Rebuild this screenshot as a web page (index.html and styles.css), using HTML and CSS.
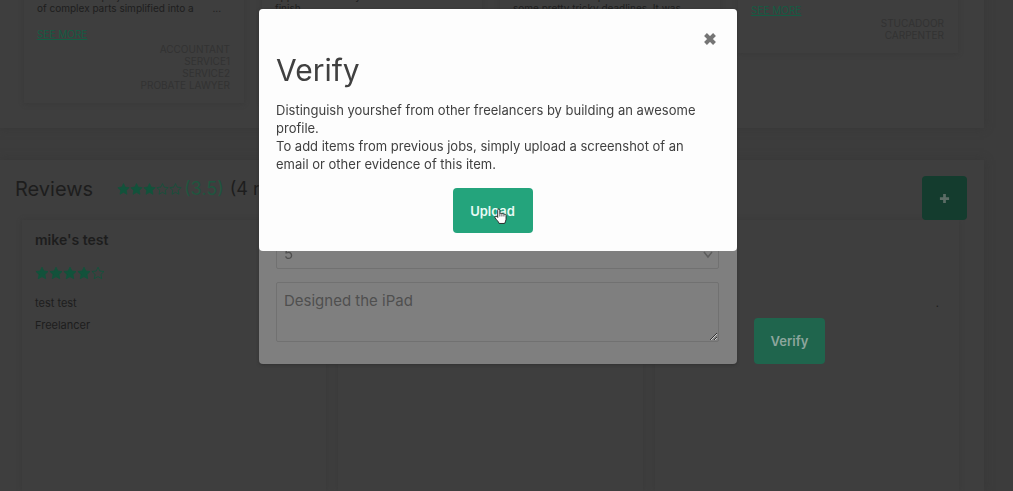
FILE: index.html
```html
<!DOCTYPE html>
<html lang="en">
<head>
<meta charset="utf-8">
<title>Verify</title>
<link rel="stylesheet" href="styles.css">
</head>
<body>
<svg class="defs" aria-hidden="true">
  <symbol id="star" viewBox="0 0 24 24"><path d="M12 2l3.100 6.600 7.200.9-5.300 5 1.400 7.200L12 18.200l-6.400 3.500L7 14.500l-5.300-5 7.200-.9z" stroke="currentColor" stroke-width="1.500" stroke-linejoin="round"/></symbol>
</svg>

<main class="page">
  <section class="panel jobs">
    <article class="job">
      <p>to deliver the project with a lot<br>of complex parts simplified into a <span class="more">...</span></p>
      <a href="#">SEE MORE</a>
      <ul><li>ACCOUNTANT</li><li>SERVICE1</li><li>SERVICE2</li><li>PROBATE LAWYER</li></ul>
    </article>
    <article class="job"><p>approached every detail to<br>finish</p></article>
    <article class="job"><p>and delivered the plan to<br>some pretty tricky deadlines. It was</p></article>
    <article class="job short">
      <a href="#">SEE MORE</a>
      <ul><li>STUCADOOR</li><li>CARPENTER</li></ul>
    </article>
  </section>

  <section class="panel reviews">
    <header class="reviews-head">
      <h2>Reviews</h2>
      <span class="stars head-stars">
        <svg class="full"><use href="#star"/></svg><svg class="full"><use href="#star"/></svg><svg class="full"><use href="#star"/></svg><svg><use href="#star"/></svg><svg><use href="#star"/></svg>
      </span>
      <span class="score">(3.5)</span>
      <span class="count">(4 reviews)</span>
      <button class="add" type="button" aria-label="Add review">
        <svg viewBox="0 0 12 12"><path d="M6 1v10M1 6h10" stroke="currentColor" stroke-width="3"/></svg>
      </button>
    </header>
    <div class="review-grid">
      <article class="review">
        <h3>mike's test</h3>
        <span class="stars">
          <svg class="full"><use href="#star"/></svg><svg class="full"><use href="#star"/></svg><svg class="full"><use href="#star"/></svg><svg class="full"><use href="#star"/></svg><svg><use href="#star"/></svg>
        </span>
        <p>test test</p>
        <p>Freelancer</p>
      </article>
      <article class="review"></article>
      <article class="review last"><p>.</p></article>
    </div>
  </section>
</main>

<div class="layer">
  <form class="dialog form-dialog">
    <div class="select-wrap">
      <select aria-label="Rating"><option>5</option></select>
      <svg viewBox="0 0 10 8"><path d="M1 1l4 5 4-5" fill="none" stroke="currentColor" stroke-width="1.500"/></svg>
    </div>
    <textarea aria-label="Description">Designed the iPad</textarea>
    <button class="verify" type="button">Verify</button>
  </form>
</div>

<div class="layer">
  <div class="dialog verify-dialog" role="dialog" aria-labelledby="title">
    <button class="close" type="button" aria-label="Close">
      <svg viewBox="0 0 14 14"><path d="M2.500 2.500l9 9M11.500 2.500l-9 9" stroke="currentColor" stroke-width="4"/></svg>
    </button>
    <h1 id="title">Verify</h1>
    <p>Distinguish yourshef from other freelancers by building an awesome profile.<br>To add items from previous jobs, simply upload a screenshot of an email or other evidence of this item.</p>
    <button class="upload" type="button">Upload
      <svg class="pointer" viewBox="0 0 14 18"><path d="M4 10V2.200C4 .6 6.300.6 6.300 2.200V6c.4-.9 2-.8 2.200.3.5-.8 2-.6 2.200.5.8-.6 2.300-.2 2.300 1.200v4c0 1.500-1 2.500-1.500 4.500H5.500C5 14.500 2.500 12.500 1.200 10.500.3 9 2.200 8.200 3 9z" fill="#fff" stroke="#222" stroke-linejoin="round"/><path d="M6.300 6v3M8.500 6.500V9M10.700 7v2" stroke="#222" stroke-width=".8"/></svg>
    </button>
  </div>
</div>
</body>
</html>
```
FILE: styles.css
```css
* { box-sizing: border-box; }

body {
  margin: 0;
  height: 100vh;
  overflow: hidden;
  background: #3c3c3c;
  color: #1d1d1d;
  font-family: Inter, "Open Sans", sans-serif;
  font-size: 11px;
}

h1, h2, h3, p, ul { margin: 0; padding: 0; font-weight: 400; }
button { border: 0; border-radius: 4px; font: inherit; font-weight: 600; cursor: pointer; }
.defs { display: none; }

.page {
  display: flex;
  flex-direction: column;
  gap: 32px;
  height: 100vh;
  padding-right: 29px;
}

.panel { background: #3e3e3e; box-shadow: 0 0 8px #373737; }

.jobs {
  display: grid;
  grid-template-columns: repeat(4, 1fr);
  gap: 18px;
  flex: none;
  padding: 0 26px 25px 24px;
  margin-top: -10px;
}

.job {
  display: flex;
  flex-direction: column;
  padding: 0 14px 12px 13px;
  font-size: 10px;
  line-height: 12px;
  box-shadow: 0 1px 4px #393939;
  white-space: nowrap;
}
.job .more { margin-left: 16px; }
.job a {
  align-self: flex-start;
  margin-top: 14px;
  color: #145c43;
  text-decoration: underline;
  text-decoration-skip-ink: none;
}
.job ul {
  list-style: none;
  text-align: right;
  color: #323232;
  margin-top: 3px;
}
.job.short { align-self: start; }
.job.short ul { margin-top: 1px; }

.reviews {
  display: flex;
  flex-direction: column;
  flex: 1;
  padding: 16px 17px 0 15px;
}

.reviews-head {
  display: flex;
  align-items: flex-start;
  position: relative;
  font-size: 18px;
  line-height: 26px;
  white-space: nowrap;
}
.reviews-head h2 { font-size: 20px; width: 102px; }

.stars { display: flex; color: #12523b; }
.stars svg { width: 14px; height: 14px; fill: none; }
.stars .full { fill: currentColor; }
.head-stars { height: 26px; align-items: center; }
.head-stars svg { width: 13px; }
.score { color: #20553f; margin: 0 6px 0 2px; }

.add {
  width: 45px;
  height: 44px;
  margin-left: auto;
  background: #143c2e;
  color: #5b6c65;
}
.add svg { width: 11px; height: 11px; }

.review-grid {
  display: grid;
  grid-template-columns: repeat(3, 1fr);
  gap: 12px;
  flex: 1;
  padding: 0 8px 0 7px;
}
.review {
  padding: 12px 13px;
  box-shadow: 0 0 4px #393939;
  line-height: 22px;
}
.review h3 { font-size: 14px; font-weight: 600; line-height: 16px; }
.review .stars { margin: 18px 0 12px; }
.review.last { padding: 72px 20px; text-align: right; }

.layer {
  position: fixed;
  inset: 0;
  display: flex;
  justify-content: center;
  align-items: flex-start;
  padding: 9px 17px 0 0;
}

.dialog {
  position: relative;
  width: 478px;
  max-width: 100%;
  border-radius: 4px;
  padding: 0 18px 0 17px;
}

.form-dialog {
  display: flex;
  flex-direction: column;
  gap: 13px;
  padding-top: 228px;
  padding-bottom: 22px;
  background: #7f7f7f;
  box-shadow: 0 1px 3px #303030;
}
.select-wrap { position: relative; }
.select-wrap svg {
  position: absolute;
  right: 6px;
  bottom: 10px;
  width: 10px;
  height: 8px;
  color: #5d5d5d;
}
select, textarea {
  display: block;
  width: 100%;
  background: #7f7f7f;
  border: 1px solid #717171;
  border-radius: 2px;
  color: #4f4f4f;
  font: inherit;
  font-size: 15px;
}
select { appearance: none; height: 32px; padding: 0 7px; }
textarea { height: 60px; padding: 9px 7px; line-height: 18px; }

.verify {
  position: absolute;
  left: calc(100% + 17px);
  bottom: 0;
  width: 71px;
  height: 46px;
  padding: 0;
  background: #1f654d;
  color: #8da69d;
  font-size: 13px;
}

.verify-dialog {
  display: flex;
  flex-direction: column;
  padding-top: 22px;
  padding-bottom: 18px;
  background: #fdfdfd;
  color: #404040;
}
.close {
  align-self: flex-end;
  display: flex;
  padding: 0;
  margin-right: 2px;
  background: none;
  color: #757575;
}
.close svg { width: 14px; height: 16px; }
.verify-dialog h1 { font-size: 30px; line-height: 42px; margin: 2px 0 10px; }
.verify-dialog p { font-size: 13px; line-height: 18px; }

.upload {
  position: relative;
  align-self: center;
  margin: 15px 10px 0 0;
  width: 80px;
  height: 45px;
  padding: 0;
  background: #24a47c;
  color: #e8faf4;
  font-size: 13px;
}
.pointer { position: absolute; left: 41px; top: 20px; width: 13px; height: 17px; }
```
